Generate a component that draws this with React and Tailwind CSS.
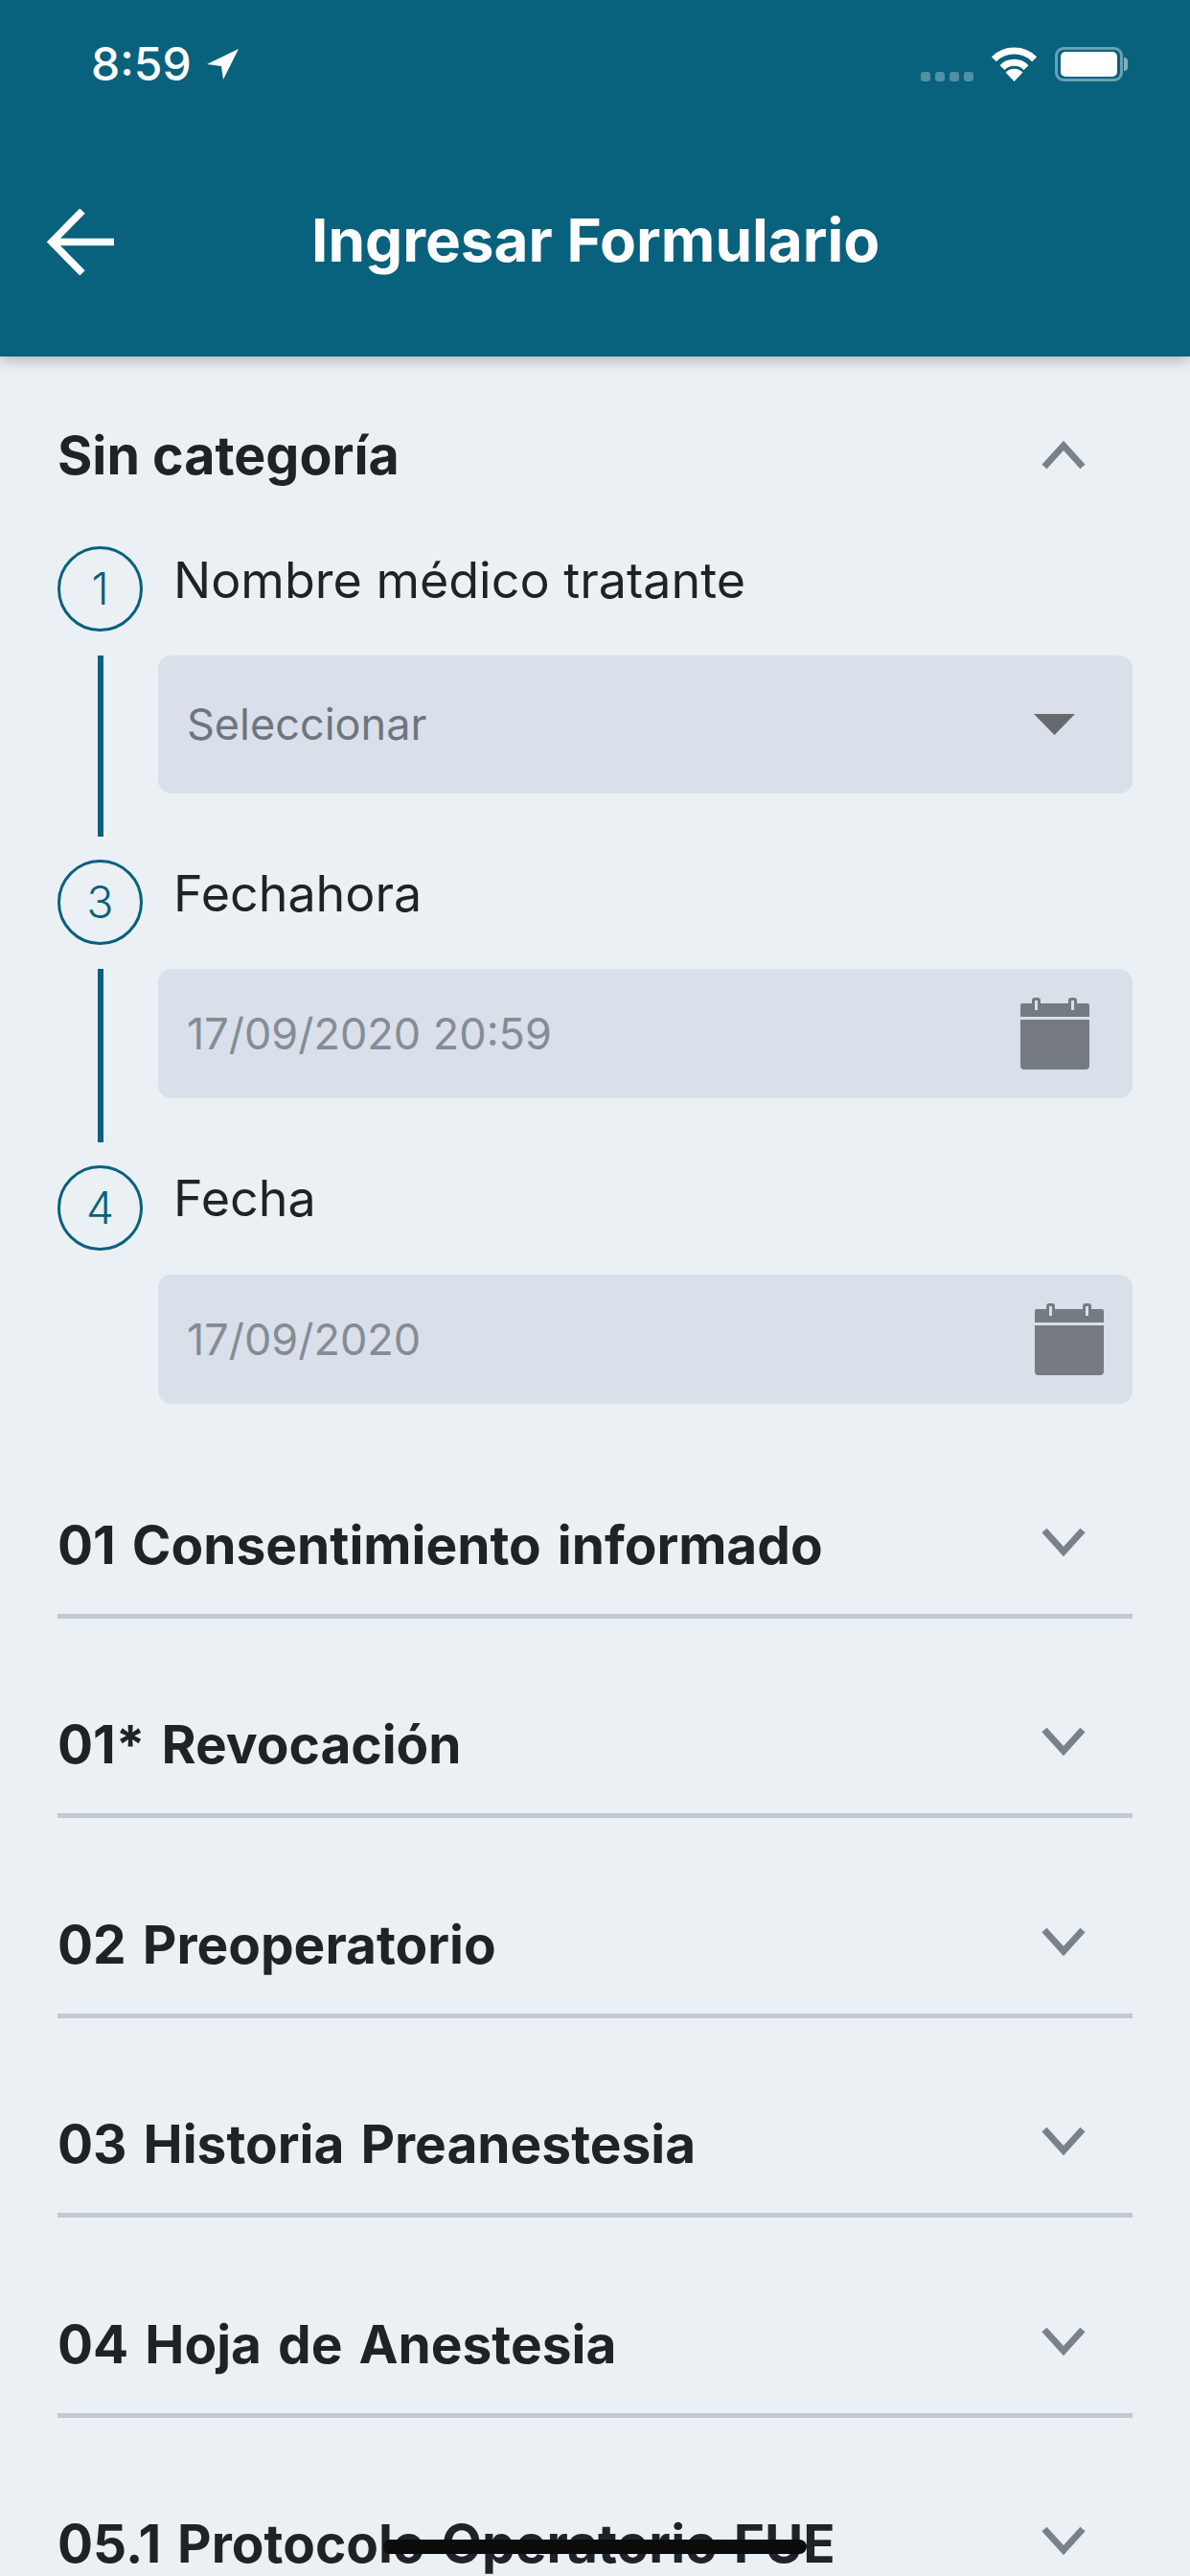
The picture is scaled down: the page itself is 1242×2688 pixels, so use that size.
import React from "react";

const sections = [
  "01 Consentimiento informado",
  "01* Revocación",
  "02 Preoperatorio",
  "03 Historia Preanestesia",
  "04 Hoja de Anestesia",
  "05.1 Protocolo Operatorio FUE",
];

const Chevron = ({ up = false }) => (
  <svg width="46" height="30" viewBox="0 0 46 30" fill="none" className="shrink-0">
    <path
      d={up ? "M3 27 L23 5 L43 27" : "M3 3 L23 25 L43 3"}
      stroke="#7a8187"
      strokeWidth="7"
      strokeLinejoin="miter"
    />
  </svg>
);

const CalendarIcon = () => (
  <svg width="72" height="75" viewBox="0 0 72 75" className="shrink-0">
    <path d="M12 6 V3 Q12 0 15 0 H18 Q21 0 21 3 V6 Z" fill="#757b81" />
    <path d="M50 6 V3 Q50 0 53 0 H56 Q59 0 59 3 V6 Z" fill="#757b81" />
    <path d="M2 6 H70 Q72 6 72 8 V20 H0 V8 Q0 6 2 6 Z" fill="#757b81" />
    <rect x="15" y="3" width="3" height="10" fill="#d9e0ea" />
    <rect x="53" y="3" width="3" height="10" fill="#d9e0ea" />
    <path d="M0 23 H72 V71 Q72 75 68 75 H4 Q0 75 0 71 Z" fill="#757b81" />
  </svg>
);

const Step = ({ number, label, line, bodyHeight, labelShift, children }) => (
  <div className="flex flex-col">
    <div className="flex h-[89px] items-start">
      <div className="flex h-[89px] w-[89px] shrink-0 items-center justify-center rounded-full border-[3px] border-[#08617d] text-[46px] font-light text-[#08617d]">
        {number}
      </div>
      <span className={`ml-[32px] text-[52px] leading-[60px] text-[#1f2226] ${labelShift}`}>{label}</span>
    </div>
    <div className="mt-[25px] flex" style={{ height: bodyHeight }}>
      <div className="flex w-[89px] shrink-0 justify-center">
        {line && <div className="h-full w-[6px] bg-[#08617d]" />}
      </div>
      <div className="ml-[16px] flex-1">{children}</div>
    </div>
  </div>
);

const Field = ({ height, right, textClass, text, pr }) => (
  <div
    className={`flex items-center justify-between rounded-[14px] bg-[#d9e0ea] pl-[30px] ${pr}`}
    style={{ height }}
  >
    <span className={`text-[45px] ${textClass}`}>{text}</span>
    {right}
  </div>
);

const App = () => {
  return (
    <div
      className="relative h-[2688px] w-[1242px] overflow-hidden bg-[#ebf0f5]"
      style={{ fontFamily: "Inter, 'Noto Sans', sans-serif" }}
    >
      <header className="relative z-10 flex h-[372px] flex-col bg-[#08617d] text-white shadow-[0_4px_14px_rgba(0,0,0,0.25)]">
        <div className="flex h-[134px] items-start justify-between pl-[95px] pr-[65px] pt-[49px]">
          <div className="flex items-center">
            <span className="text-[48px] leading-[36px] font-medium">8:59</span>
            <svg width="33" height="32" viewBox="0 0 33 32" className="ml-[16px]">
              <path d="M33 0 L0 16 L15 18 L17 32 Z" fill="#fff" />
            </svg>
          </div>
          <div className="flex items-end">
            <div className="mr-[19px] flex gap-[5px]">
              <div className="h-[10px] w-[10px] rounded-[3px] bg-white/30" />
              <div className="h-[10px] w-[10px] rounded-[3px] bg-white/30" />
              <div className="h-[10px] w-[10px] rounded-[3px] bg-white/30" />
              <div className="h-[10px] w-[10px] rounded-[3px] bg-white/30" />
            </div>
            <svg width="47" height="36" viewBox="0 0 47 36" fill="none" className="mr-[19px]">
              <path d="M2.3 12.8 A30 30 0 0 1 44.7 12.8" stroke="#fff" strokeWidth="7" />
              <path d="M11 21.6 A17.5 17.5 0 0 1 36 21.6" stroke="#fff" strokeWidth="7" />
              <path d="M23.5 36 L14.5 26.5 A12.5 12.5 0 0 1 32.5 26.5 Z" fill="#fff" />
            </svg>
            <div className="flex h-[36px] items-center">
              <div className="flex h-[36px] w-[71px] items-center justify-center rounded-[9px] border-[3px] border-white/40">
                <div className="h-[26px] w-[59px] rounded-[5px] bg-white" />
              </div>
              <div className="ml-[1px] h-[14px] w-[4px] rounded-r-full bg-white/50" />
            </div>
          </div>
        </div>
        <div className="flex items-center pl-[49px] pt-[84px]">
          <svg width="70" height="69" viewBox="0 0 70 69" fill="none" className="shrink-0">
            <path d="M37 2 L5 34.5 L37 67 M5 34.5 H70" stroke="#fff" strokeWidth="7.5" />
          </svg>
          <h1 className="-mt-[4px] ml-[206px] text-[62px] leading-[69px] font-[650]">Ingresar Formulario</h1>
        </div>
      </header>

      <main className="px-[60px]">
        <div className="mt-[58px] mb-[50px] flex h-[90px] items-center justify-between pr-[49px]">
          <span className="text-[55.5px] font-[650] text-[#1f2226]">Sin categoría</span>
          <Chevron up />
        </div>

        <Step number="1" label="Nombre médico tratante" line bodyHeight={189} labelShift="mt-[6px]">
          <Field
            height={144}
            pr="pr-[60px]"
            textClass="text-[#6f757d]"
            text="Seleccionar"
            right={
              <svg width="43" height="22" viewBox="0 0 43 22" className="shrink-0">
                <path d="M0 0 H43 L21.5 22 Z" fill="#666a6e" />
              </svg>
            }
          />
        </Step>
        <div className="mt-[24px]">
          <Step number="3" label="Fechahora" line bodyHeight={181} labelShift="mt-[6px]">
            <Field
              height={135}
              pr="pr-[45px]"
              textClass="text-[#868c95]"
              text="17/09/2020 20:59"
              right={<CalendarIcon />}
            />
          </Step>
        </div>
        <div className="mt-[24px]">
          <Step number="4" label="Fecha" bodyHeight={135} labelShift="mt-[5px]">
            <Field
              height={135}
              pr="pr-[30px]"
              textClass="text-[#868c95]"
              text="17/09/2020"
              right={<CalendarIcon />}
            />
          </Step>
        </div>

        <div className="mt-[15px]">
          {sections.map((title) => (
            <div
              key={title}
              className="flex h-[208.5px] items-center justify-between border-b-[5px] border-[#c2c9d0] pt-[60px] pr-[49px]"
            >
              <span className="text-[55px] font-[650] [word-spacing:4px] text-[#1f2226]">{title}</span>
              <div className="-mt-[6px]">
                <Chevron />
              </div>
            </div>
          ))}
        </div>
      </main>

      <div className="absolute top-[2650px] left-[400px] h-[15px] w-[442px] rounded-full bg-[#0c0c0c]" />
    </div>
  );
};

export default App;
